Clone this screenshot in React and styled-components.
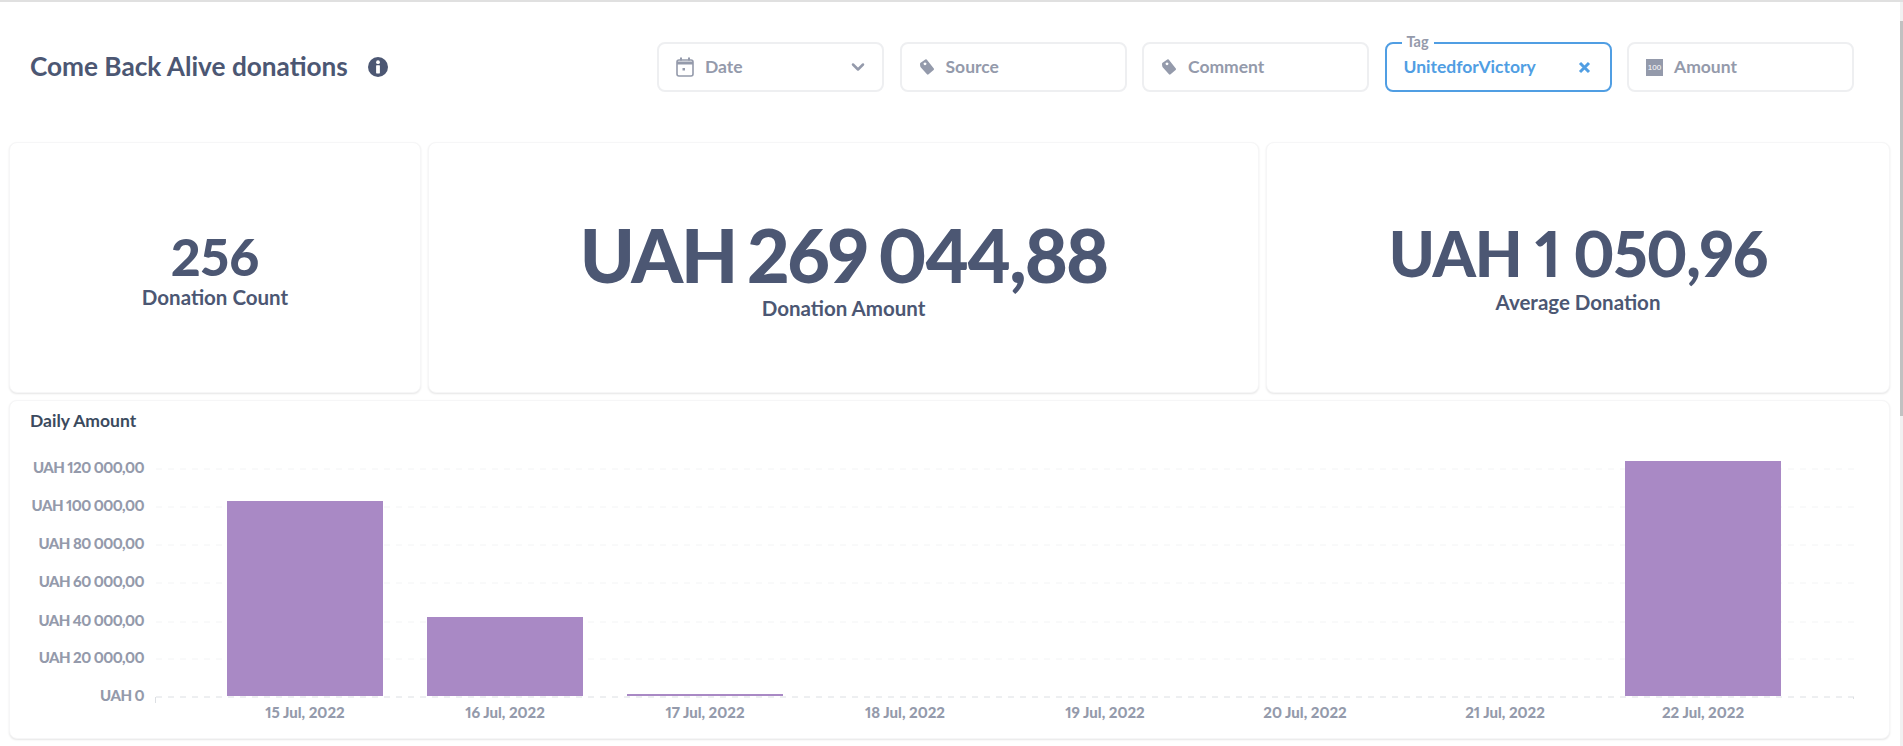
import styled, { createGlobalStyle } from 'styled-components';
import { ChevronDown } from 'lucide-react';

const GlobalStyle = createGlobalStyle`
  html, body {
    margin: 0;
    padding: 0;
    background: #fff;
    font-family: Lato, 'Noto Sans', sans-serif;
    font-feature-settings: 'liga' 1, 'pnum' 1;
    overflow: hidden;
  }
`;

const Page = styled.div`
  width: 1903px;
  height: 746px;
  box-sizing: border-box;
  border-top: 2px solid #e0e0e0;
  display: flex;
  overflow: hidden;
`;

const Content = styled.main`
  flex: 1;
  min-width: 0;
  padding: 0 10px 0 9px;
`;

const ScrollTrack = styled.div`
  width: 3px;
  background: #f1f1f1;
`;

const ScrollThumb = styled.div`
  margin-top: 19px;
  height: 395px;
  background: #c1c1c1;
`;

const Header = styled.header`
  height: 140px;
  box-sizing: border-box;
  padding: 40px 36px 0 21px;
  display: flex;
  justify-content: space-between;
`;

const TitleRow = styled.div`
  display: flex;
  align-items: center;
  height: 50px;
  gap: 20px;
`;

const Title = styled.h1`
  margin: 0 0 3px;
  font-size: 26.2px;
  font-weight: 700;
  color: #4c5773;
`;

const Filters = styled.div`
  display: flex;
  gap: 15.5px;
`;

const Filter = styled.div`
  position: relative;
  width: 227px;
  height: 50px;
  box-sizing: border-box;
  border: 2px solid ${(props) => (props.$active ? '#509ee3' : '#eeeff1')};
  border-radius: 8px;
  padding: 0 17px;
  display: flex;
  align-items: center;
  gap: 11px;
  font-size: 17.5px;
  font-weight: 700;
  color: ${(props) => (props.$active ? '#509ee3' : '#949aab')};
`;

const FilterLabel = styled.span`
  flex: 1;
  margin-bottom: 2px;
`;

const Legend = styled.span`
  position: absolute;
  top: -11px;
  left: 15px;
  padding: 0 5px;
  background: #fff;
  font-size: 14.5px;
  font-weight: 700;
  color: #949aab;
`;

const Chevron = styled(ChevronDown)`
  margin-right: -3px;
`;

const Cards = styled.div`
  display: grid;
  grid-template-columns: 412px 831px 624px;
  gap: 7px;
`;

const Card = styled.section`
  height: 251px;
  box-sizing: border-box;
  background: #fff;
  border: 1px solid #f6f6f7;
  border-radius: 8px;
  box-shadow: 0 1px 2px rgba(0, 0, 0, 0.1);
  display: flex;
  flex-direction: column;
  align-items: center;
  justify-content: center;
  color: #4c5773;
`;

const Value = styled.div`
  margin-top: ${(props) => props.$lift}px;
  font-size: ${(props) => props.$size}px;
  line-height: 1;
  font-weight: 900;
  letter-spacing: ${(props) => props.$tight}em;
  word-spacing: ${(props) => props.$word}em;
`;

const Caption = styled.div`
  margin-top: ${(props) => props.$gap}px;
  font-size: 20.5px;
  line-height: 24px;
  font-weight: 700;
`;

const ChartCard = styled.section`
  margin-top: 7px;
  height: 339px;
  box-sizing: border-box;
  background: #fff;
  border: 1px solid #f6f6f7;
  border-radius: 8px;
  box-shadow: 0 1px 2px rgba(0, 0, 0, 0.1);
  padding: 10px 0 0 20px;
`;

const ChartTitle = styled.h2`
  margin: 0;
  font-size: 17.5px;
  line-height: 20px;
  font-weight: 700;
  color: #3b4a5e;
`;

const Plot = styled.svg`
  display: block;
  margin: 0 0 0 -20px;
`;

const InfoIcon = () => (
  <svg width="20" height="20" viewBox="0 0 20 20">
    <circle cx="10" cy="10" r="10" fill="#4c5773" />
    <circle cx="10" cy="5.2" r="1.9" fill="#fff" />
    <rect x="8.1" y="8.2" width="3.8" height="8.2" rx="0.6" fill="#fff" />
  </svg>
);

const CalendarIcon = () => (
  <svg width="18" height="20" viewBox="0 0 18 20" fill="none">
    <path d="M1 6h16" stroke="#949aab" strokeWidth="3" />
    <rect x="1" y="3" width="16" height="16" rx="2" stroke="#949aab" strokeWidth="1.6" />
    <rect x="4" y="0.5" width="2" height="3" fill="#949aab" />
    <rect x="12" y="0.5" width="2" height="3" fill="#949aab" />
    <rect x="6.5" y="11" width="2.5" height="2.5" fill="#949aab" />
  </svg>
);

const TagIcon = () => (
  <svg width="16" height="16" viewBox="-1 0 16 16">
    <path
      fillRule="evenodd"
      fill="#949aab"
      d="M5.3 0.4 Q6 -0.1 6.7 0.5 L13.8 9.4 Q14.4 10.2 13.6 10.9 L8.6 15.3 Q7.8 16 7 15.3 L0.9 8.4 Q0.3 7.6 0.2 7 L0 5 Q0 4.2 0.6 3.8 Z M5 3.4 a1.4 1.4 0 1 0 0.01 0 Z"
    />
  </svg>
);

const CloseSvg = styled.svg`
  margin-right: 2px;
`;

const CloseIcon = () => (
  <CloseSvg width="13" height="13" viewBox="0 0 13 13">
    <path d="M2 2 L11 11 M11 2 L2 11" stroke="#509ee3" strokeWidth="3" />
  </CloseSvg>
);

const NumberIcon = styled.span`
  width: 17px;
  height: 17px;
  background: #949aab;
  color: #fff;
  font-size: 8px;
  font-weight: 400;
  font-family: 'Liberation Sans', sans-serif;
  display: flex;
  align-items: center;
  justify-content: center;
`;

const yTicks = [
  ['UAH 120 000,00', 468],
  ['UAH 100 000,00', 506],
  ['UAH 80 000,00', 544],
  ['UAH 60 000,00', 582],
  ['UAH 40 000,00', 621],
  ['UAH 20 000,00', 658],
  ['UAH 0', 696],
];

const bars = [
  { label: '15 Jul, 2022', top: 501, x: 227 },
  { label: '16 Jul, 2022', top: 617, x: 427 },
  { label: '17 Jul, 2022', top: 694, x: 627 },
  { label: '18 Jul, 2022', top: 697, x: 827 },
  { label: '19 Jul, 2022', top: 697, x: 1027 },
  { label: '20 Jul, 2022', top: 697, x: 1227 },
  { label: '21 Jul, 2022', top: 697, x: 1427 },
  { label: '22 Jul, 2022', top: 461, x: 1625 },
];

// bar and tick values are page coordinates, these move them into the svg
const originY = 431;
const originX = 10;

const DailyChart = () => (
  <Plot width="1879" height="300">
    {yTicks.map(([label, y]) => (
      <g key={label}>
        <text
          x={144 - originX}
          y={y - originY + 5}
          textAnchor="end"
          fontSize="15"
          fontWeight="900"
          letterSpacing="-0.55"
          fill="#949aab"
        >
          {label}
        </text>
        <line
          x1={156 - originX}
          x2={1854 - originX}
          y1={y + 1 - originY}
          y2={y + 1 - originY}
          stroke={label === 'UAH 0' ? '#dcdfe3' : '#f3f4f5'}
          strokeDasharray="6 6"
        />
      </g>
    ))}
    <line x1={155.5 - originX} x2={155.5 - originX} y1={697 - originY} y2={703 - originY} stroke="#dcdfe3" />
    <line x1={1853.5 - originX} x2={1853.5 - originX} y1={697 - originY} y2={699 - originY} stroke="#dcdfe3" />
    {bars.map((bar) => (
      <g key={bar.label}>
        {bar.top < 697 && (
          <rect
            x={bar.x - originX}
            y={bar.top - originY}
            width="156"
            height={696 - bar.top}
            fill="#a989c5"
          />
        )}
        <text
          x={bar.x + 78 - originX}
          y={718 - originY}
          textAnchor="middle"
          fontSize="15"
          fontWeight="900"
          fill="#949aab"
        >
          {bar.label}
        </text>
      </g>
    ))}
  </Plot>
);

const App = () => (
  <>
    <GlobalStyle />
    <Page>
      <Content>
        <Header>
          <TitleRow>
            <Title>Come Back Alive donations</Title>
            <InfoIcon />
          </TitleRow>
          <Filters>
            <Filter>
              <CalendarIcon />
              <FilterLabel>Date</FilterLabel>
              <Chevron size={20} strokeWidth={3} color="#949aab" />
            </Filter>
            <Filter>
              <TagIcon />
              <FilterLabel>Source</FilterLabel>
            </Filter>
            <Filter>
              <TagIcon />
              <FilterLabel>Comment</FilterLabel>
            </Filter>
            <Filter $active>
              <Legend>Tag</Legend>
              <FilterLabel>UnitedforVictory</FilterLabel>
              <CloseIcon />
            </Filter>
            <Filter>
              <NumberIcon>100</NumberIcon>
              <FilterLabel>Amount</FilterLabel>
            </Filter>
          </Filters>
        </Header>
        <Cards>
          <Card>
            <Value $lift={3} $size={52} $tight={0} $word={0}>256</Value>
            <Caption $gap={3}>Donation Count</Caption>
          </Card>
          <Card>
            <Value $lift={3} $size={74} $tight={-0.03} $word={-0.06}>UAH 269 044,88</Value>
            <Caption $gap={4}>Donation Amount</Caption>
          </Card>
          <Card>
            <Value $lift={0} $size={62} $tight={-0.02} $word={0}>UAH 1 050,96</Value>
            <Caption $gap={6}>Average Donation</Caption>
          </Card>
        </Cards>
        <ChartCard>
          <ChartTitle>Daily Amount</ChartTitle>
          <DailyChart />
        </ChartCard>
      </Content>
      <ScrollTrack>
        <ScrollThumb />
      </ScrollTrack>
    </Page>
  </>
);

export default App;
